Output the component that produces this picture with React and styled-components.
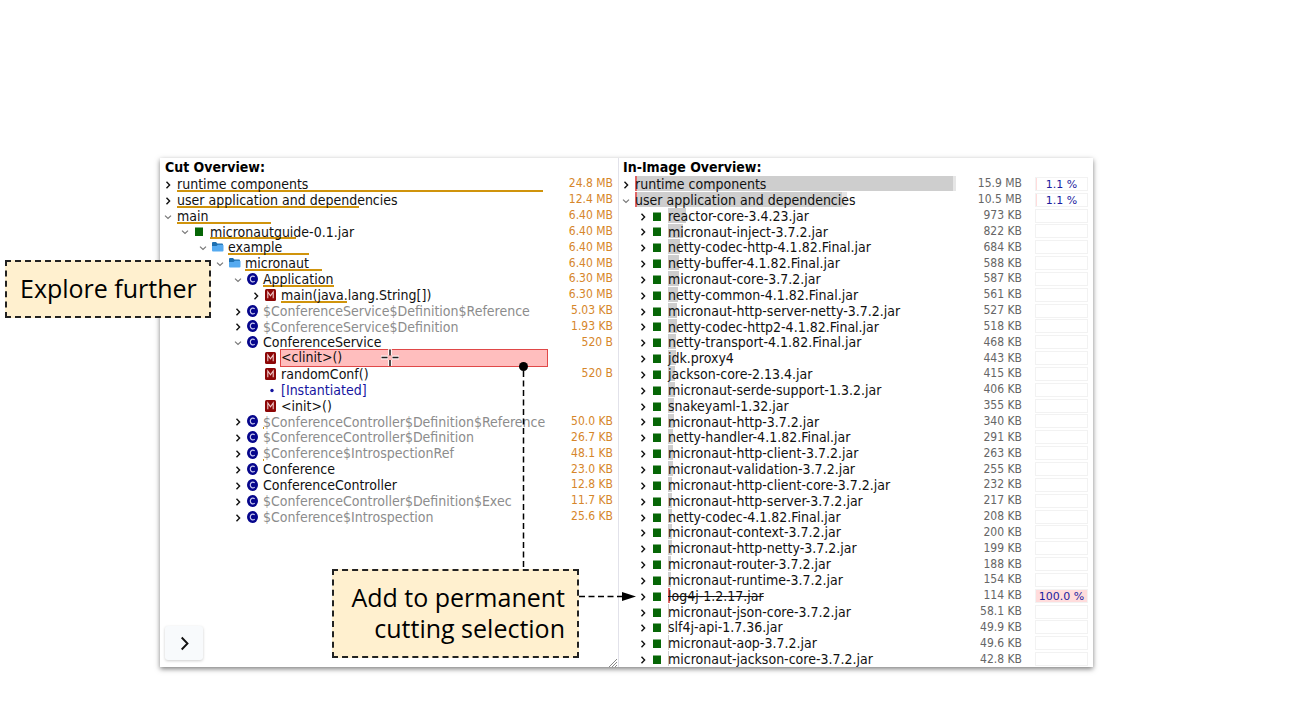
import React from "react";
import styled, { createGlobalStyle, css } from "styled-components";

const GlobalStyle = createGlobalStyle`
  * { box-sizing: border-box; }
  body {
    margin: 0;
    background: #fff;
    color: #111;
    font-family: "DejaVu Sans Condensed", "DejaVu Sans", sans-serif;
    font-size: 14px;
  }
`;

const INDENT = [0, 17, 35, 52, 70, 88];

const Stage = styled.main`
  padding: 158px 198px 32px 160px;
`;

const Window = styled.section`
  position: relative;
  display: grid;
  grid-template-columns: 458fr 475fr;
  min-height: 509px;
  background: #fff;
  box-shadow: 0 2px 5px rgba(0, 0, 0, 0.5);
`;

const Pane = styled.div`
  display: flex;
  flex-direction: column;
  min-width: 0;
  padding: 0 5px 0 ${(p) => (p.$divided ? "2px" : "3px")};
  border-left: ${(p) => (p.$divided ? "1px solid #e2e2ea" : "none")};
`;

const Title = styled.h2`
  margin: 0;
  padding-left: 2px;
  height: 18px;
  font-size: 14px;
  line-height: 18px;
  font-weight: 700;
  color: #000;
`;

const Tree = styled.ul`
  flex: 1;
  display: grid;
  grid-template-rows: repeat(31, minmax(0, 1fr));
  margin: 0;
  padding: 0;
  list-style: none;
`;

const Row = styled.li`
  display: flex;
  align-items: center;
  min-width: 0;
  padding-left: ${(p) => INDENT[p.$depth]}px;
`;

const Toggle = styled.button`
  flex: none;
  display: flex;
  justify-content: center;
  align-items: center;
  width: 10px;
  height: 12px;
  margin: 2px 4px 0 0;
  padding: 0;
  border: 0;
  background: none;
  color: ${(p) => (p.$open ? "#777" : "#111")};
`;

const ToggleSpace = styled.span`
  flex: none;
  width: 14px;
`;

const IconSlot = styled.span`
  flex: none;
  display: flex;
  justify-content: center;
  width: 12px;
  margin-right: 4px;
`;

const Label = styled.span`
  position: relative;
  flex: 1;
  align-self: stretch;
  min-width: 0;
  margin-bottom: -1px;
  line-height: 16px;
  white-space: nowrap;
  color: ${(p) => (p.$tone === "muted" ? "#8c8c8c" : p.$tone === "note" ? "#1414a0" : "#111")};
  text-decoration: ${(p) => (p.$struck ? "line-through" : "none")};
  ${(p) =>
    p.$selected &&
    css`
      margin: -1px 0 -1px -1px;
      border: 1px solid #e04848;
      background: #ffbebe;
      line-height: 15px;
    `}
`;

const LabelText = styled.span`
  position: relative;
`;

const Underline = styled.span`
  position: absolute;
  left: 0;
  bottom: 1px;
  height: 2px;
  background: #d0940c;
`;

const Share = styled.span`
  position: absolute;
  left: 0;
  top: 0;
  bottom: 2px;
  background: #cecece;
  border-right: ${(p) => (p.$tail ? p.$tail : 0)}px solid #e6e6e6;
  box-shadow: ${(p) => (p.$cut ? "inset 2px 0 #e06666" : "none")};
`;

const Size = styled.span`
  flex: none;
  width: 65px;
  padding-bottom: 1px;
  text-align: right;
  font-size: 12px;
  line-height: 14px;
  color: ${(p) => (p.$grey ? "#666" : "#d6862a")};
`;

const Percent = styled.span`
  flex: none;
  width: 53px;
  height: 14px;
  margin-left: 13px;
  border: 1px solid #f2f2f2;
  background: ${(p) => (p.$full ? "#ffdcdc" : "#fff")};
  box-shadow: ${(p) => (p.$some ? "inset 1px 0 #ffdcdc" : "none")};
  text-align: center;
  font-size: 11px;
  line-height: 14px;
  font-family: "DejaVu Sans", sans-serif;
  color: #1c1ca0;
`;

const NextButton = styled.button`
  position: absolute;
  left: 5px;
  bottom: 7px;
  display: flex;
  align-items: center;
  justify-content: center;
  width: 38px;
  height: 34px;
  border: 0;
  border-radius: 3px;
  background: #f8fafc;
  box-shadow: 0 1px 3px rgba(0, 0, 0, 0.2);
  color: #111;
`;

const Callout = styled.aside`
  position: absolute;
  border: 2px dashed #222;
  background: #fff0cf;
  padding: 11px 12px 12px 13px;
  font-family: "Open Sans", sans-serif;
  font-size: 25px;
  line-height: 31px;
  text-align: right;
  color: #000;
  white-space: nowrap;
`;

const ExploreCallout = styled(Callout)`
  left: -155px;
  top: 102px;
`;

const CutCallout = styled(Callout)`
  left: 172px;
  top: 411px;
  min-width: 247px;
`;

const Overlay = styled.svg`
  position: absolute;
  left: 0;
  top: 0;
  pointer-events: none;
`;

function Chevron({ open, size = 8 }) {
  return (
    <svg width={size} height={size} viewBox="0 0 8 8" fill="none" stroke="currentColor" aria-hidden="true">
      {open ? (
        <path d="M1 2.6 4 5.4 7 2.6" strokeWidth="1.2" />
      ) : (
        <path d="M2.5 .8 5.6 4 2.5 7.2" strokeWidth={size > 8 ? 1 : 1.4} />
      )}
    </svg>
  );
}

function Icon({ kind }) {
  if (kind === "jar")
    return (
      <svg width="12" height="12" viewBox="0 0 12 12">
        <rect x="1" y="2.5" width="8" height="8.5" fill="#066606" />
      </svg>
    );
  if (kind === "package")
    return (
      <svg width="12" height="12" viewBox="0 0 12 12">
        <path d="M0 2q0-1 1-1h3l1.4 1.5H10q1 0 1 1V6H0z" fill="#1d6fb0" />
        <path d="M0 5h4.500l1.300-1.300h5q.7 0 .7.7v5.100q0 1-1 1H1q-1 0-1-1z" fill="#55aaf0" />
      </svg>
    );
  if (kind === "class")
    return (
      <svg width="12" height="12" viewBox="0 0 12 12">
        <ellipse cx="5.5" cy="6" rx="5.5" ry="6" fill="#06068c" />
        <path d="M7.7 3.8C5.7 2.3 3.3 3.4 3.3 6s2.4 3.7 4.4 2.2" fill="none" stroke="#c6c6ee" strokeWidth="1.2" />
      </svg>
    );
  if (kind === "method")
    return (
      <svg width="12" height="12" viewBox="0 0 12 12">
        <rect x="0" y="0" width="11" height="12" rx="1.5" fill="#8c0606" />
        <path d="M2.8 9.3V3l2.7 3.8L8.2 3v6.3" fill="none" stroke="#f0caca" strokeWidth="1.1" />
      </svg>
    );
  return (
    <svg width="12" height="12" viewBox="0 0 12 12">
      <circle cx="7" cy="6.5" r="1.7" fill="#1414a0" />
    </svg>
  );
}

const cutRows = [
  { name: "runtime components", depth: 0, size: "24.8 MB", bar: 366 },
  { name: "user application and dependencies", depth: 0, size: "12.4 MB", bar: 182 },
  { name: "main", depth: 0, open: true, size: "6.40 MB", bar: 94 },
  { name: "micronautguide-0.1.jar", depth: 1, open: true, icon: "jar", size: "6.40 MB", bar: 86 },
  { name: "example", depth: 2, open: true, icon: "package", size: "6.40 MB", bar: 81 },
  { name: "micronaut", depth: 3, open: true, icon: "package", size: "6.40 MB", bar: 77 },
  { name: "Application", depth: 4, open: true, icon: "class", size: "6.30 MB", bar: 71 },
  { name: "main(java.lang.String[])", depth: 5, icon: "method", size: "6.30 MB", bar: 66 },
  { name: "$ConferenceService$Definition$Reference", depth: 4, icon: "class", size: "5.03 KB", tone: "muted" },
  { name: "$ConferenceService$Definition", depth: 4, icon: "class", size: "1.93 KB", tone: "muted" },
  { name: "ConferenceService", depth: 4, open: true, icon: "class", size: "520 B" },
  { name: "<clinit>()", depth: 5, leaf: true, icon: "method", selected: true },
  { name: "randomConf()", depth: 5, leaf: true, icon: "method", size: "520 B" },
  { name: "[Instantiated]", depth: 5, leaf: true, icon: "dot", tone: "note" },
  { name: "<init>()", depth: 5, leaf: true, icon: "method" },
  { name: "$ConferenceController$Definition$Reference", depth: 4, icon: "class", size: "50.0 KB", tone: "muted", bar: 1 },
  { name: "$ConferenceController$Definition", depth: 4, icon: "class", size: "26.7 KB", tone: "muted" },
  { name: "$Conference$IntrospectionRef", depth: 4, icon: "class", size: "48.1 KB", tone: "muted", bar: 1 },
  { name: "Conference", depth: 4, icon: "class", size: "23.0 KB" },
  { name: "ConferenceController", depth: 4, icon: "class", size: "12.8 KB" },
  { name: "$ConferenceController$Definition$Exec", depth: 4, icon: "class", size: "11.7 KB", tone: "muted" },
  { name: "$Conference$Introspection", depth: 4, icon: "class", size: "25.6 KB", tone: "muted" },
];

const jars = [
  ["reactor-core-3.4.23.jar", "973"],
  ["micronaut-inject-3.7.2.jar", "822"],
  ["netty-codec-http-4.1.82.Final.jar", "684"],
  ["netty-buffer-4.1.82.Final.jar", "588"],
  ["micronaut-core-3.7.2.jar", "587"],
  ["netty-common-4.1.82.Final.jar", "561"],
  ["micronaut-http-server-netty-3.7.2.jar", "527"],
  ["netty-codec-http2-4.1.82.Final.jar", "518"],
  ["netty-transport-4.1.82.Final.jar", "468"],
  ["jdk.proxy4", "443"],
  ["jackson-core-2.13.4.jar", "415"],
  ["micronaut-serde-support-1.3.2.jar", "406"],
  ["snakeyaml-1.32.jar", "355"],
  ["micronaut-http-3.7.2.jar", "340"],
  ["netty-handler-4.1.82.Final.jar", "291"],
  ["micronaut-http-client-3.7.2.jar", "263"],
  ["micronaut-validation-3.7.2.jar", "255"],
  ["micronaut-http-client-core-3.7.2.jar", "232"],
  ["micronaut-http-server-3.7.2.jar", "217"],
  ["netty-codec-4.1.82.Final.jar", "208"],
  ["micronaut-context-3.7.2.jar", "200"],
  ["micronaut-http-netty-3.7.2.jar", "199"],
  ["micronaut-router-3.7.2.jar", "188"],
  ["micronaut-runtime-3.7.2.jar", "154"],
  ["log4j-1.2.17.jar", "114", "100.0 %"],
  ["micronaut-json-core-3.7.2.jar", "58.1"],
  ["slf4j-api-1.7.36.jar", "49.9"],
  ["micronaut-aop-3.7.2.jar", "49.6"],
  ["micronaut-jackson-core-3.7.2.jar", "42.8"],
];

const imageRows = [
  { name: "runtime components", depth: 0, size: "15.9 MB", share: 321, tail: 3, cut: true, percent: "1.1 %" },
  { name: "user application and dependencies", depth: 0, open: true, size: "10.5 MB", share: 212, tail: 5, cut: true, percent: "1.1 %" },
  ...jars.map(([name, kb, percent]) => ({
    name,
    depth: 1,
    icon: "jar",
    size: `${kb} KB`,
    share: Math.max(1, Math.round(Number(kb) * 0.018)),
    cut: Boolean(percent),
    struck: Boolean(percent),
    percent: percent || "",
  })),
];

function TreeRow({ row, image }) {
  return (
    <Row $depth={row.depth}>
      {row.leaf ? (
        <ToggleSpace />
      ) : (
        <Toggle $open={row.open} aria-expanded={Boolean(row.open)} aria-label={`Toggle ${row.name}`}>
          <Chevron open={row.open} />
        </Toggle>
      )}
      {row.icon && (
        <IconSlot>
          <Icon kind={row.icon} />
        </IconSlot>
      )}
      <Label $tone={row.tone} $selected={row.selected} $struck={row.struck}>
        {row.share && <Share $cut={row.cut} $tail={row.tail} style={{ width: row.share }} />}
        {row.bar && <Underline style={{ width: row.bar }} />}
        <LabelText>{row.name}</LabelText>
      </Label>
      <Size $grey={image}>{row.size}</Size>
      {image && (
        <Percent $full={row.percent === "100.0 %"} $some={row.percent !== ""}>
          {row.percent}
        </Percent>
      )}
    </Row>
  );
}

export default function App() {
  return (
    <>
      <GlobalStyle />
      <Stage>
        <Window>
          <Pane>
            <Title>Cut Overview:</Title>
            <Tree>
              {cutRows.map((row) => (
                <TreeRow key={row.name} row={row} />
              ))}
            </Tree>
          </Pane>
          <Pane $divided>
            <Title>In-Image Overview:</Title>
            <Tree>
              {imageRows.map((row) => (
                <TreeRow key={row.name} row={row} image />
              ))}
            </Tree>
          </Pane>
          <NextButton aria-label="Next">
            <Chevron size={15} />
          </NextButton>
          <Overlay width="480" height="509" viewBox="0 0 480 509" aria-hidden="true">
            <path
              d="M230 191v6M230 202v6M221 199.5h7M232 199.5h7"
              stroke="#fff"
              strokeWidth="4"
              opacity=".8"
            />
            <path
              d="M230 191.5v6M230 202v6M221.5 199.5h6M232.5 199.5h6"
              stroke="#222"
              strokeWidth="1.6"
            />
            <circle cx="363.5" cy="208.5" r="4.5" fill="#000" />
            <path d="M363.5 213V411" stroke="#000" strokeWidth="1.5" strokeDasharray="6 3.5" />
            <path d="M419 438.5H463" stroke="#000" strokeWidth="1.5" strokeDasharray="6 3.5" />
            <path d="M462 434l14 4.5-14 4.5z" fill="#000" />
            <path d="M449 509l8-8M452 509l5-5M455 509l2-2" stroke="#888" strokeWidth="1" />
          </Overlay>
          <ExploreCallout>Explore further</ExploreCallout>
          <CutCallout>
            Add to permanent
            <br />
            cutting selection
          </CutCallout>
        </Window>
      </Stage>
    </>
  );
}
